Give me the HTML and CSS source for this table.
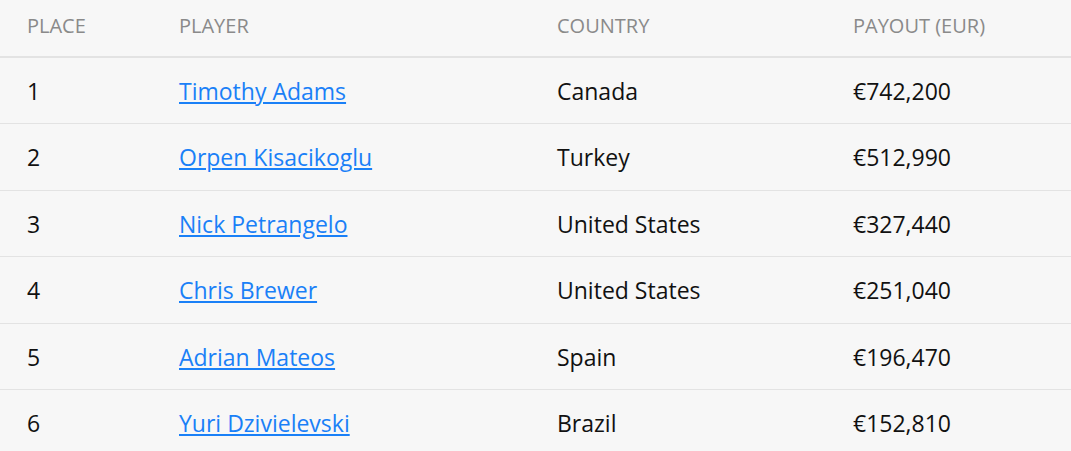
FILE: index.html
```html
<!DOCTYPE html>
<html>
<head>
<meta charset="utf-8">
<link rel="stylesheet" href="styles.css">
</head>
<body>
<table class="payouts">
  <thead>
    <tr>
      <th class="c-place">PLACE</th>
      <th class="c-player">PLAYER</th>
      <th class="c-country">COUNTRY</th>
      <th class="c-payout">PAYOUT (EUR)</th>
    </tr>
  </thead>
  <tbody>
    <tr><td>1</td><td><a href="#">Timothy Adams</a></td><td>Canada</td><td>€742,200</td></tr>
    <tr><td>2</td><td><a href="#">Orpen Kisacikoglu</a></td><td>Turkey</td><td>€512,990</td></tr>
    <tr><td>3</td><td><a href="#">Nick Petrangelo</a></td><td>United States</td><td>€327,440</td></tr>
    <tr><td>4</td><td><a href="#">Chris Brewer</a></td><td>United States</td><td>€251,040</td></tr>
    <tr><td>5</td><td><a href="#">Adrian Mateos</a></td><td>Spain</td><td>€196,470</td></tr>
    <tr><td>6</td><td><a href="#">Yuri Dzivielevski</a></td><td>Brazil</td><td>€152,810</td></tr>
  </tbody>
</table>
</body>
</html>
```
FILE: styles.css
```css
html, body {
  margin: 0;
  padding: 0;
  background: #f7f7f7;
}
body {
  font-family: "Open Sans", "Liberation Sans", sans-serif;
  color: #111;
}
.payouts {
  width: 1071px;
  border-collapse: separate;
  border-spacing: 0;
  table-layout: fixed;
}
.payouts th {
  text-align: left;
  font-weight: 400;
  font-size: 20px;
  line-height: 1.2;
  color: #8a8a8a;
  height: 51.5px;
  padding: 0 0 4px 27px;
  border-bottom: 2px solid #e3e3e3;
  vertical-align: middle;
  box-sizing: content-box;
}
.c-place { width: 125px; }
.c-player { width: 351px; }
.c-country { width: 269px; }
.payouts td {
  font-size: 23px;
  line-height: 1.2;
  height: 63px;
  padding: 2.5px 0 0 27px;
  border-bottom: 1px solid #e3e3e3;
  vertical-align: middle;
  box-sizing: content-box;
}
.payouts a {
  color: #1a80f7;
  text-decoration: underline;
}
```
